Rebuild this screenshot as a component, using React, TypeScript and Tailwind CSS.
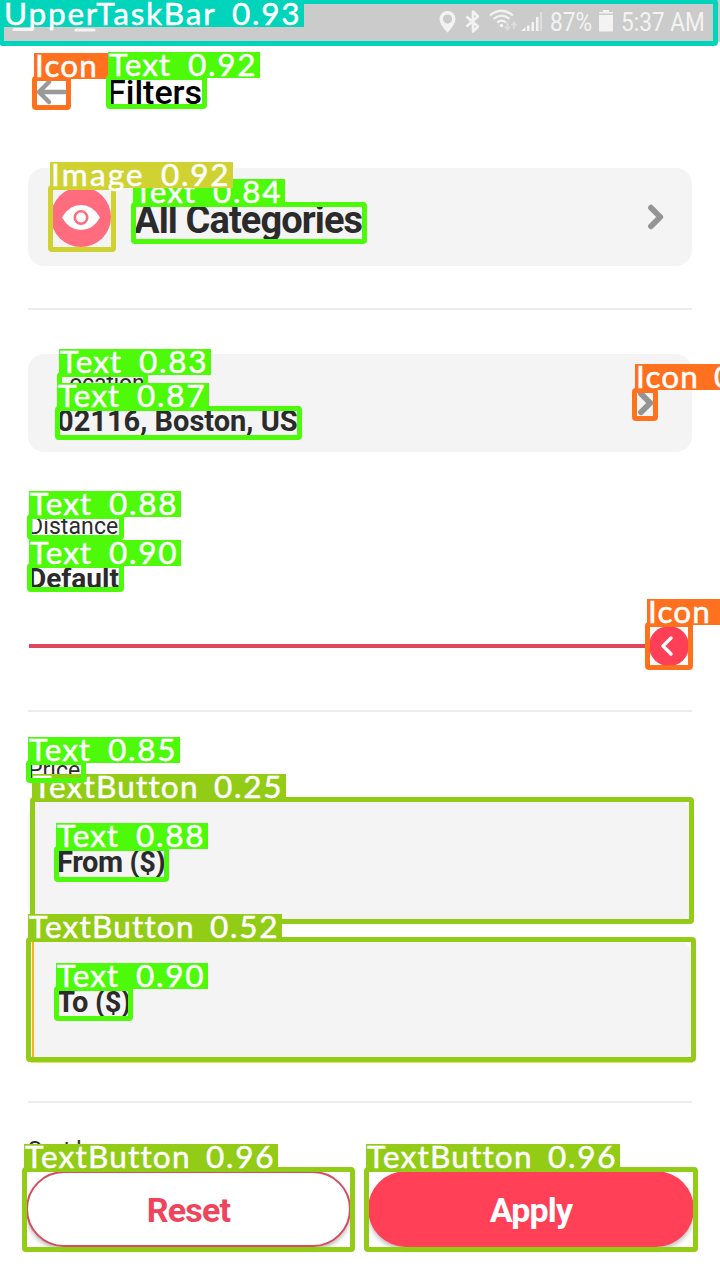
import React from "react";

type Mark = {
  name: string;
  score?: string;
  box: string;
  tag: string;
  border: string;
  fill: string;
  word: string;
};

const GREEN = { border: "border-[#4cfa0a]", fill: "bg-[#4cfa0a]" };
const OLIVE = { border: "border-[#92cc17]", fill: "bg-[#92cc17]" };
const ORANGE = { border: "border-[#ff701f]", fill: "bg-[#ff701f]" };
const TEAL = { border: "border-[#00d4bb]", fill: "bg-[#00d4bb]" };
const GOLD = { border: "border-[#cfd231]", fill: "bg-[#cfd231]" };

const TEXT = { name: "Text", word: "w-[73px] tracking-[1px]", ...GREEN };
const BUTTON = { name: "TextButton", word: "w-[175px] tracking-[1.2px]", ...OLIVE };
const ICON = { name: "Icon", word: "w-[72px] tracking-[1.1px]", ...ORANGE };

const marks: Mark[] = [
  { ...BUTTON, score: "0.25", box: "left-[30px] top-[797px] w-[664px] h-[127px]", tag: "left-[32px] top-[774px] w-[254px]" },
  { ...TEXT, score: "0.84", box: "left-[131px] top-[202px] w-[236px] h-[42px]", tag: "left-[133px] top-[179px] w-[152px]" },
  { ...TEXT, score: "0.83", box: "left-[57px] top-[372px] w-[91px] h-[26px]", tag: "left-[59px] top-[349px] w-[152px]" },
  { ...TEXT, score: "0.85", box: "left-[26px] top-[760px] w-[60px] h-[23px]", tag: "left-[28px] top-[737px] w-[152px]" },
  { ...TEXT, score: "0.87", box: "left-[55px] top-[406px] w-[247px] h-[34px]", tag: "left-[57px] top-[383px] w-[152px]" },
  { ...ICON, box: "left-[632px] top-[388px] w-[26px] h-[33px]", tag: "left-[635px] top-[364px] w-[85px]", score: "0" },
  { ...ICON, box: "left-[645px] top-[622px] w-[48px] h-[48px]", tag: "left-[647px] top-[599px] w-[73px]" },
  { ...ICON, box: "left-[32px] top-[76px] w-[39px] h-[34px]", tag: "left-[34px] top-[53px] w-[76px]" },
  { ...BUTTON, score: "0.52", box: "left-[26px] top-[937px] w-[670px] h-[125px]", tag: "left-[28px] top-[914px] w-[254px]" },
  { ...TEXT, score: "0.88", box: "left-[54px] top-[846px] w-[115px] h-[36px]", tag: "left-[56px] top-[823px] w-[152px]" },
  { ...TEXT, score: "0.88", box: "left-[27px] top-[514px] w-[97px] h-[26px]", tag: "left-[29px] top-[491px] w-[152px]" },
  { ...TEXT, score: "0.90", box: "left-[27px] top-[563px] w-[97px] h-[29px]", tag: "left-[29px] top-[540px] w-[152px]" },
  { ...TEXT, score: "0.90", box: "left-[54px] top-[986px] w-[79px] h-[35px]", tag: "left-[56px] top-[963px] w-[152px]" },
  { ...TEXT, score: "0.92", box: "left-[106px] top-[75px] w-[101px] h-[34px]", tag: "left-[108px] top-[52px] w-[152px]" },
  { name: "Image", score: "0.92", word: "w-[104px] tracking-[2.2px]", ...GOLD, box: "left-[48px] top-[185px] w-[68px] h-[67px]", tag: "left-[50px] top-[162px] w-[183px]" },
  { name: "UpperTaskBar", score: "0.93", word: "w-[222px] tracking-[1.8px]", ...TEAL, box: "-left-px -top-px w-[719px] h-[47px]", tag: "left-[3px] top-px w-[301px]" },
  { ...BUTTON, score: "0.96", box: "left-[22px] top-[1167px] w-[333px] h-[85px]", tag: "left-[24px] top-[1144px] w-[254px]" },
  { ...BUTTON, score: "0.96", box: "left-[364px] top-[1167px] w-[334px] h-[85px]", tag: "left-[366px] top-[1144px] w-[254px]" },
];

function Annotation({ m }: { m: Mark }) {
  return (
    <>
      <div className={`absolute rounded-[4px] border-[5px] ${m.border} ${m.box}`} />
      <div
        className={`absolute flex h-[26px] whitespace-nowrap pl-px font-['Lato','Noto_Sans',sans-serif] text-[31.5px] leading-[24px] text-white [-webkit-text-stroke:0.5px_white] ${m.fill} ${m.tag}`}
      >
        <span className={`shrink-0 ${m.word}`}>{m.name}</span>
        {m.score && <span className="shrink-0 pl-1.5 tracking-[1.8px]">{m.score}</span>}
      </div>
    </>
  );
}

function Chevron() {
  return (
    <svg className="h-[26px] w-[18px] shrink-0" viewBox="0 0 18 26" fill="none" stroke="#949494" strokeWidth="5.8" strokeLinecap="round" strokeLinejoin="round">
      <path d="M4 3.700L13.200 13L4 22.300" />
    </svg>
  );
}

function StatusBar() {
  return (
    <div className="flex h-[42px] bg-[#cbcbcb] pt-[9px] text-[#f3f3f3]">
      <svg className="mr-[338px] h-7 w-[100px] shrink-0" viewBox="0 9 100 28" fill="none" stroke="currentColor" strokeWidth="3" strokeLinecap="round">
        <path d="M14 29.500H32M76 30H94" />
      </svg>
      <svg className="h-7 w-[106px] shrink-0" viewBox="438 9 106 28" fill="none">
        <path d="M447.5 11a8 8 0 0 0-8 8c0 5.500 8 13.500 8 13.500s8-8 8-13.500a8 8 0 0 0-8-8Zm0 3.500a4.600 4.600 0 1 1 0 9.200a4.600 4.600 0 0 1 0-9.200Z" fill="currentColor" fillRule="evenodd" />
        <path d="M466.500 16.500L478 26.500L473 31.500V11.500L478 16.500L466.500 26.500" stroke="currentColor" strokeWidth="2.600" strokeLinejoin="round" />
        <path d="M490 15.500Q501.500 6 513 15.500M493.500 19Q501.500 12.300 509.500 19M497 22.500Q501.500 18.800 506 22.500" stroke="currentColor" strokeWidth="2.200" />
        <circle cx="501.500" cy="25.500" r="1.800" fill="currentColor" />
        <path d="M507.500 22.500V29M505 26.500L507.500 29.500L510 26.500M514 29V23M511.500 25.500L514 22.500L516.500 25.500" stroke="#dddddd" strokeWidth="1.800" />
        <path d="M521 31L525.500 27V31ZM527 25.500H529.500V31H527ZM531.500 22H534V31H531.500ZM536 17H538.500V31H536Z" fill="currentColor" />
        <path d="M540 12H542V31H540Z" fill="#dfdfdf" />
      </svg>
      <span className="ml-[6px] w-[49px] shrink-0 origin-left scale-x-[0.87] font-['Roboto',sans-serif] text-[26px] leading-[27px]">87%</span>
      <svg className="mt-px h-[22px] w-[14px] shrink-0" viewBox="0 0 14 22" fill="currentColor">
        <path d="M4 0H10V2H14V3.500H0V2H4ZM0 5H14V21.500H0Z" />
      </svg>
      <span className="ml-[8px] shrink-0 origin-left scale-x-[0.87] whitespace-nowrap font-['Roboto',sans-serif] text-[26px] leading-[27px]">5:37 AM</span>
    </div>
  );
}

function PriceField({ label, className }: { label: string; className: string }) {
  return <div className={`mx-7 rounded-2xl bg-[#f4f4f4] pl-[29px] text-[29px] font-bold leading-8 tracking-[-0.4px] ${className}`}>{label}</div>;
}

export default function App() {
  return (
    <div className="relative h-[1280px] w-[720px] overflow-hidden bg-white font-['Roboto',sans-serif] text-[#2b2b2b]">
      <StatusBar />

      <header className="flex h-[126px] pl-[35px] pt-[30px] text-black">
        <svg className="mt-1.5 h-7 w-8" viewBox="0 0 32 28" fill="none" stroke="#999999" strokeWidth="4.500" strokeLinecap="round" strokeLinejoin="round">
          <path d="M30 14H4M14 4L4 14L14 24" />
        </svg>
        <h1 className="ml-10 text-[34px] font-medium leading-10">Filters</h1>
      </header>

      <div className="mx-7 flex h-[98px] items-center rounded-2xl bg-[#f4f4f4] pl-[23px] pr-[27px]">
        <div className="flex size-[60px] items-center justify-center rounded-full bg-[#ff6c7d]">
          <svg className="h-[27px] w-[40px]" viewBox="0 0 40 27">
            <path d="M1 13.500Q8 1 20 1T39 13.500Q32 26 20 26T1 13.500Z" fill="#ffffff" />
            <circle cx="20" cy="13.500" r="6.200" fill="none" stroke="#ff6c7d" strokeWidth="2.600" />
          </svg>
        </div>
        <span className="ml-[23px] flex-1 pt-[5px] text-[38px] font-bold leading-[44px] tracking-[-0.9px]">All Categories</span>
        <Chevron />
      </div>

      <div className="mx-7 mt-[42px] h-0.5 bg-[#ececec]" />

      <div className="mx-7 mt-[44px] flex h-[98px] items-center rounded-2xl bg-[#f4f4f4] pl-[29px] pr-[37px]">
        <div className="flex flex-1 flex-col gap-[7px] pt-[1px]">
          <span className="text-[23px] leading-7 tracking-[-0.2px]">Location</span>
          <span className="text-[29px] font-bold leading-8">02116, Boston, US</span>
        </div>
        <Chevron />
      </div>

      <div className="flex h-[172px] flex-col px-7 pt-[61px]">
        <span className="text-[23px] leading-7 tracking-[0.1px]">Distance</span>
        <span className="mt-[22px] text-[28px] font-bold leading-8">Default</span>
      </div>

      <div className="flex h-11 items-center pl-[29px]">
        <div className="h-1 w-[620px] bg-[#df455d]" />
        <div className="flex size-[40px] items-center justify-center rounded-full bg-[#ff3f56]">
          <svg className="mr-1 h-5 w-3" viewBox="0 0 12 20" fill="none" stroke="#ffffff" strokeWidth="3.400" strokeLinecap="round" strokeLinejoin="round">
            <path d="M10 2L2 10L10 18" />
          </svg>
        </div>
      </div>

      <div className="mx-7 mt-[42px] h-0.5 bg-[#ececec]" />
      <div className="h-[88px] px-7 pt-[45px] text-[23px] leading-7">Price</div>
      <PriceField label="From ($)" className="h-[122px] pt-[46px]" />
      <PriceField label="To ($)" className="mt-[18px] h-[122px] pt-[46px]" />
      <div className="mx-7 mt-[39px] h-0.5 bg-[#ececec]" />
      <div className="h-[68px] px-7 pt-[34px] text-[23px] leading-7">Sort by</div>

      <div className="flex gap-[17px] pl-[26px] text-[34px] font-bold leading-10 tracking-[-0.800px]">
        <button className="flex h-[76px] w-[325px] items-center justify-center rounded-full border-2 border-[#d84c60] bg-white pt-0.5 text-[#ee455c] shadow-[0_3px_4px_rgba(0,0,0,0.25)]">Reset</button>
        <button className="flex h-[76px] w-[326px] items-center justify-center rounded-full bg-[#ff4057] pt-0.5 text-white shadow-[0_3px_4px_rgba(0,0,0,0.25)]">Apply</button>
      </div>

      <div className="absolute left-[32px] top-[942px] h-[116px] w-[2px] bg-[#f5b31f]" />
      <div className="absolute left-[31px] top-[1062px] h-px w-[662px] bg-[#ecdf65]" />
      {marks.map((m, i) => (
        <Annotation key={i} m={m} />
      ))}
    </div>
  );
}
